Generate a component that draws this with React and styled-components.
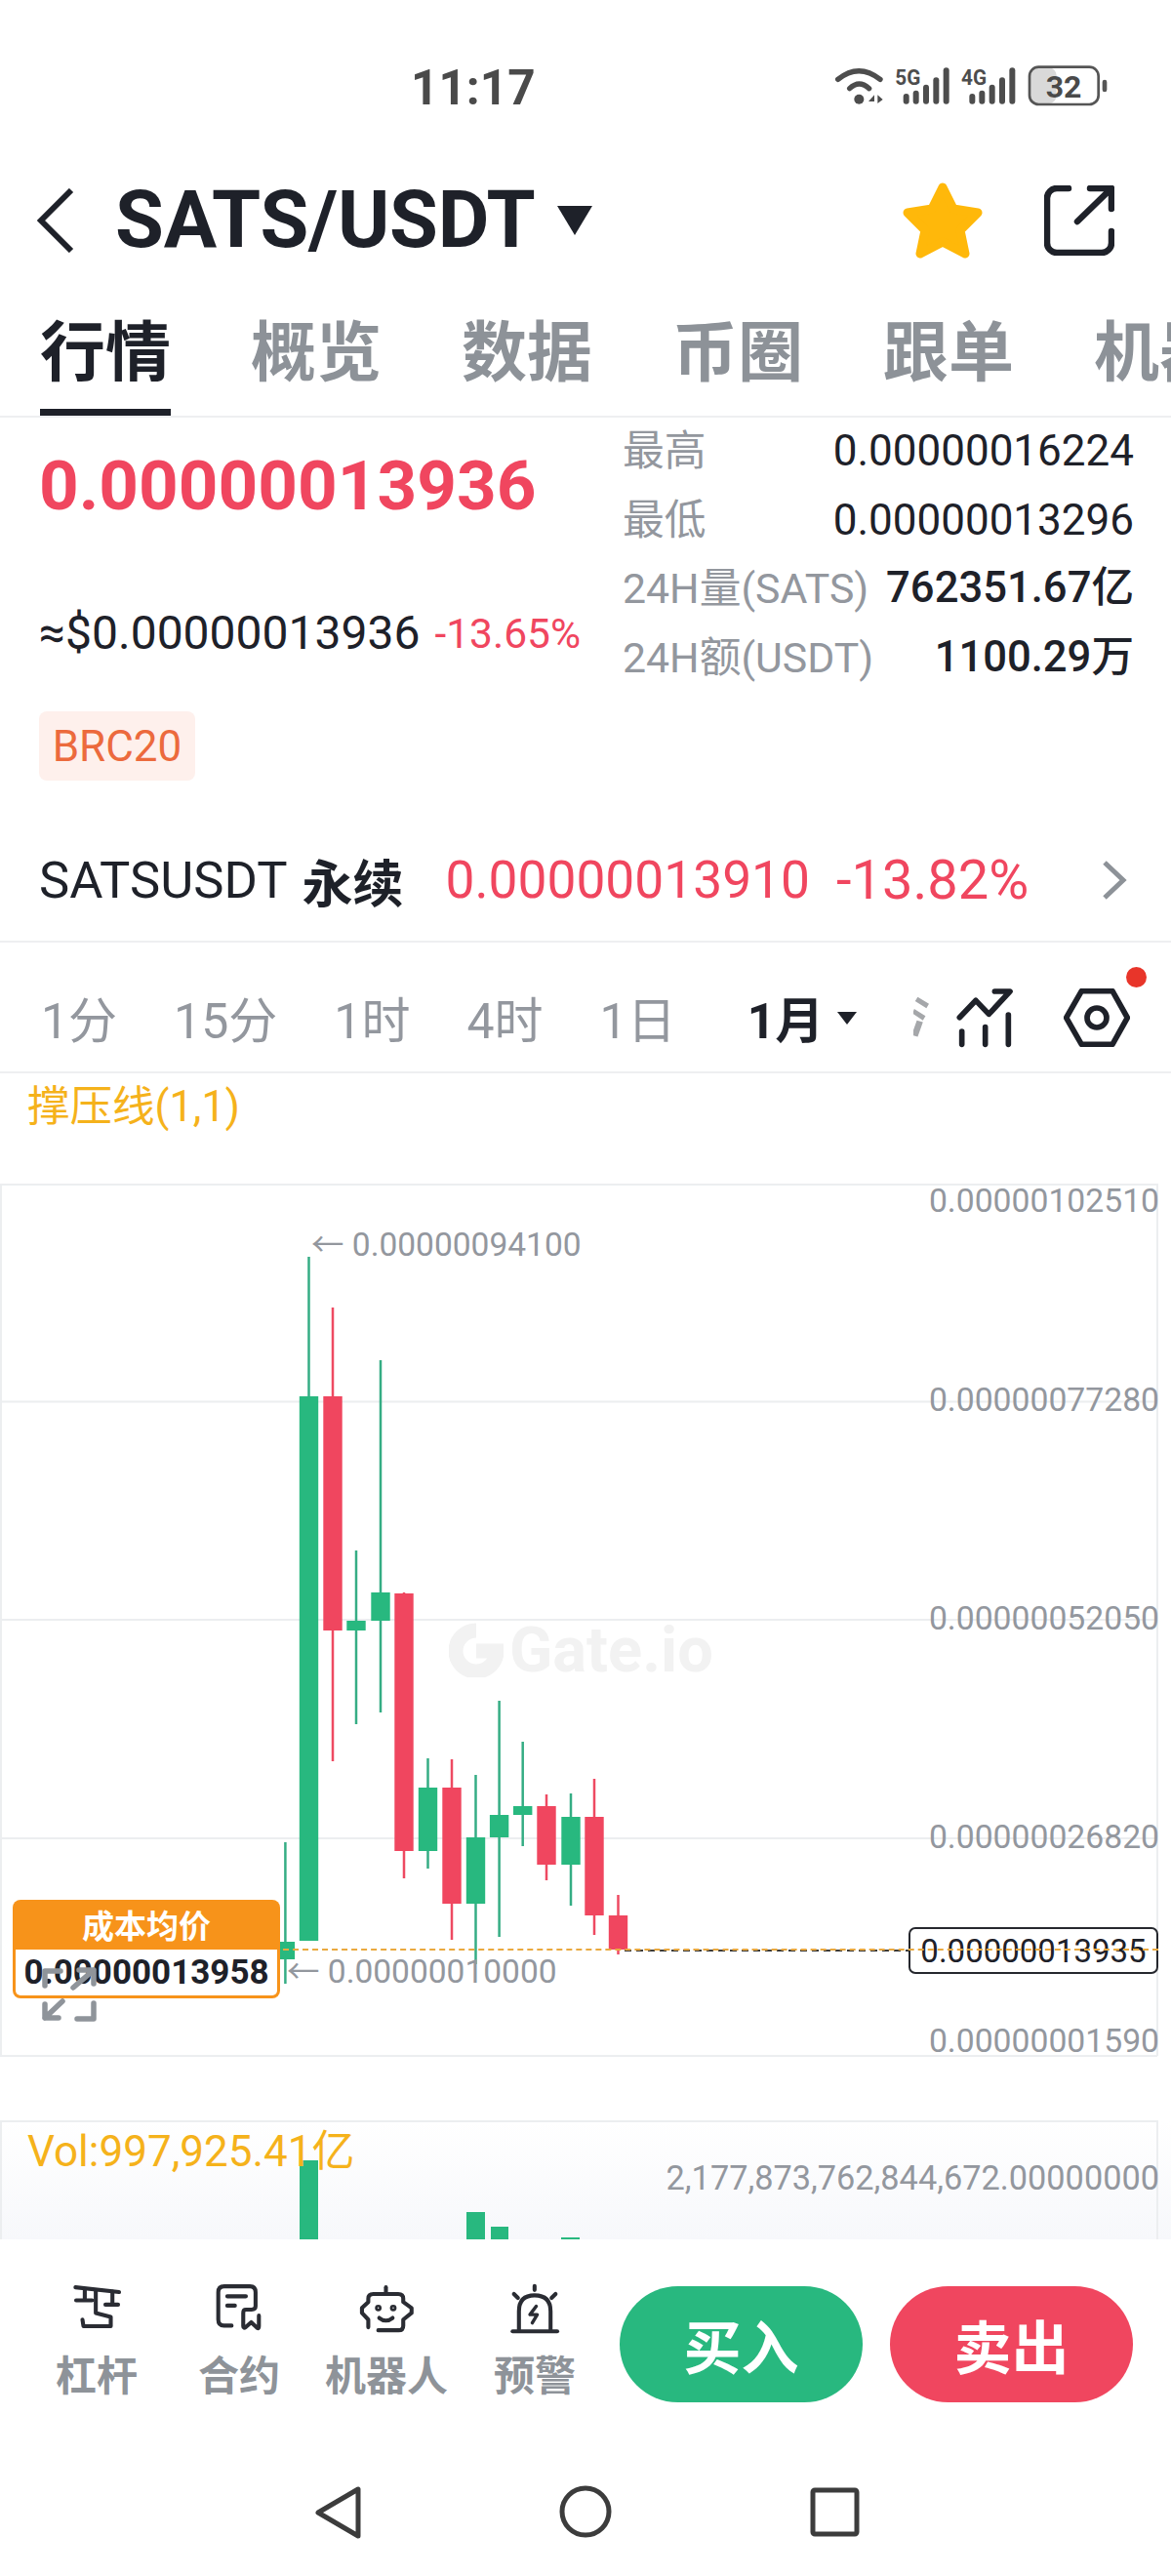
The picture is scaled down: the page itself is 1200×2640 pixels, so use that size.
import React from "react";
import styled, { createGlobalStyle } from "styled-components";

const FONT = `Roboto, "Noto Sans CJK SC", "Noto Sans", sans-serif`;
const INK = "#1e2129";
const MUTED = "#93979e";
const RED = "#f0465f";
const GREEN = "#28b87f";
const YELLOW = "#f5b21b";
const LINE = "#eeeff1";

const Global = createGlobalStyle`
  html, body { margin: 0; padding: 0; background: #fff; }
  * { box-sizing: border-box; }
`;

const Page = styled.div`
  width: 1200px;
  height: 2640px;
  overflow: hidden;
  background: #fff;
  font-family: ${FONT};
  color: ${INK};
`;

/* status bar */
const StatusBar = styled.div`
  height: 170px;
  padding: 61px 50px 0 421px;
  display: flex;
  justify-content: space-between;
  align-items: flex-start;
`;
const Clock = styled.div`
  font-size: 49.5px;
  line-height: 58px;
  font-weight: 700;
  color: #4a4a4a;
`;
const StatusIcons = styled.svg`
  width: 300px;
  height: 55px;
  display: block;
  margin-top: -1px;
`;

/* header */
const Header = styled.div`
  height: 112px;
  padding: 0 58px 0 37px;
  display: flex;
  align-items: center;
`;
const BackChevron = styled.svg`
  width: 40px;
  height: 66px;
  margin-right: 41px;
`;
const Title = styled.div`
  font-size: 81px;
  line-height: 90px;
  font-weight: 700;
  letter-spacing: -0.2px;
`;
const TitleCaret = styled.div`
  width: 0;
  height: 0;
  margin-left: 22px;
  border-left: 18px solid transparent;
  border-right: 18px solid transparent;
  border-top: 30px solid ${INK};
`;
const HeaderActions = styled.div`
  margin-left: auto;
  display: flex;
  align-items: center;
  gap: 62px;
`;

/* tabs */
const Tabs = styled.div`
  height: 146px;
  padding-left: 41px;
  display: flex;
  gap: 82px;
  overflow: hidden;
  border-bottom: 2px solid ${LINE};
`;
const Tab = styled.div`
  position: relative;
  flex: none;
  height: 144px;
  padding-top: 47px;
  font-size: 67px;
  line-height: 67px;
  font-weight: 700;
  white-space: nowrap;
  color: ${(p) => (p.$active ? INK : "#8d9298")};
  ${(p) =>
    p.$active &&
    `&::after { content: ""; position: absolute; left: 0; right: 0; bottom: 0; height: 7px; background: ${INK}; }`}
`;

/* quote */
const Quote = styled.div`
  height: 422px;
  display: flex;
`;
const QuoteLeft = styled.div`
  width: 638px;
  padding: 34px 0 0 40px;
`;
const LastPrice = styled.div`
  font-size: 71px;
  line-height: 72px;
  font-weight: 700;
  color: ${RED};
`;
const FiatRow = styled.div`
  margin-top: 84px;
  height: 60px;
  display: flex;
  align-items: center;
  gap: 15px;
  white-space: nowrap;
`;
const Fiat = styled.span`
  font-size: 48px;
  font-weight: 400;
`;
const FiatChange = styled.span`
  font-size: 42.5px;
  color: ${RED};
  margin-top: 2px;
`;
const Tag = styled.div`
  margin-top: 51px;
  width: 160px;
  height: 71px;
  border-radius: 8px;
  background: #fef0ec;
  color: #ec6a3d;
  font-size: 44px;
  display: flex;
  align-items: center;
  justify-content: center;
`;
const Stats = styled.div`
  width: 524px;
  margin-top: -1px;
  display: flex;
  flex-direction: column;
`;
const StatRow = styled.div`
  height: 70.5px;
  display: flex;
  align-items: center;
  justify-content: space-between;
  white-space: nowrap;
`;
const StatLabel = styled.span`
  font-size: 42.8px;
  line-height: 44px;
  color: ${MUTED};
`;
const StatValue = styled.span`
  font-size: ${(p) => (p.$strong ? 43.6 : 44)}px;
  line-height: 44px;
  font-weight: ${(p) => (p.$strong ? 500 : 400)};
`;

/* perpetual row */
const PerpRow = styled.div`
  height: 116px;
  padding: 0 45px 10px 40px;
  display: flex;
  align-items: center;
  border-bottom: 2px solid ${LINE};
  white-space: nowrap;
`;
const PerpName = styled.span`
  font-size: 52.5px;
`;
const PerpKind = styled.span`
  font-size: 52px;
  font-weight: 700;
  margin-left: 15px;
`;
const PerpPrice = styled.span`
  font-size: 53.3px;
  color: ${RED};
  margin-left: 43px;
`;
const PerpChange = styled.span`
  font-size: 56px;
  color: ${RED};
  margin-left: 27px;
`;
const PerpChevron = styled.svg`
  margin-left: auto;
  width: 26px;
  height: 42px;
`;

/* periods */
const Periods = styled.div`
  height: 134px;
  padding: 20px 54px 0 42px;
  display: flex;
  align-items: center;
  gap: 58px;
  border-bottom: 2px solid ${LINE};
  white-space: nowrap;
`;
const Period = styled.span`
  flex: none;
  font-size: 50px;
  color: ${MUTED};
`;
const ActivePeriod = styled.div`
  flex: none;
  margin-left: 15px;
  display: flex;
  align-items: center;
  gap: 14px;
  font-size: 50px;
  font-weight: 700;
`;
const PeriodCaret = styled.div`
  width: 0;
  height: 0;
  margin-top: 2px;
  border-left: 10px solid transparent;
  border-right: 10px solid transparent;
  border-top: 13px solid ${INK};
`;
const PeriodTools = styled.div`
  margin-left: auto;
  margin-top: 2px;
  display: flex;
  align-items: center;
  gap: 28px;
`;
const FadedMark = styled.svg`
  width: 16px;
  height: 46px;
`;
const ChartTool = styled.svg`
  width: 60px;
  height: 65px;
  margin-right: 22px;
`;
const HexWrap = styled.div`
  position: relative;
  width: 68px;
  height: 60px;
`;
const RedDot = styled.div`
  position: absolute;
  top: -22px;
  left: 64px;
  width: 21px;
  height: 21px;
  border-radius: 50%;
  background: #e8352a;
`;

/* indicator */
const IndicatorRow = styled.div`
  height: 113px;
  padding: 13px 0 0 28px;
  font-size: 43.5px;
  line-height: 44px;
  color: ${YELLOW};
`;

/* chart */
const Chart = styled.div`
  position: relative;
  height: 960px;
`;
const ChartSvg = styled.svg`
  position: absolute;
  inset: 0;
  display: block;
`;
const AxisLabel = styled.div`
  position: absolute;
  right: 12px;
  top: ${(p) => p.$y}px;
  font-size: 33.7px;
  line-height: 40px;
  color: ${MUTED};
`;
const Extreme = styled.div`
  position: absolute;
  left: ${(p) => p.$x}px;
  top: ${(p) => p.$y}px;
  font-size: 33.5px;
  line-height: 40px;
  color: ${MUTED};
  white-space: nowrap;
`;
const Watermark = styled.div`
  position: absolute;
  left: 460px;
  top: 448px;
  height: 60px;
  display: flex;
  align-items: center;
  gap: 6px;
  font-size: 65px;
  font-weight: 700;
  line-height: 60px;
  color: #f2f2f2;
`;
const PriceTag = styled.div`
  position: absolute;
  right: 13px;
  top: 762px;
  width: 256px;
  height: 48px;
  border: 2px solid #26282e;
  border-radius: 7px;
  background: #fff;
  font-size: 33px;
  display: flex;
  align-items: center;
  justify-content: center;
`;
const PriceLine = styled.div`
  position: absolute;
  left: 290px;
  right: 13px;
  top: 784px;
  border-top: 2px dashed #eaa93f;
`;
const CostBadge = styled.div`
  position: absolute;
  left: 13px;
  top: 734px;
  width: 274px;
  height: 101px;
  padding: 0 3px 3px;
  border-radius: 8px;
  background: #f7931a;
  display: flex;
  flex-direction: column;
`;
const CostTitle = styled.div`
  height: 51px;
  color: #fff;
  font-size: 33px;
  font-weight: 700;
  text-align: center;
  line-height: 56px;
`;
const CostValue = styled.div`
  flex: 1;
  background: #fff;
  border-radius: 0 0 5px 5px;
  font-size: 35px;
  font-weight: 700;
  display: flex;
  align-items: center;
  justify-content: center;
`;
const ExpandIcon = styled.svg`
  position: absolute;
  left: 43px;
  top: 803px;
  width: 56px;
  height: 56px;
`;

/* volume */
const Volume = styled.div`
  position: relative;
  height: 122px;
  background: linear-gradient(#ffffff, #f7f8fb);
  overflow: hidden;
`;
const VolLabel = styled.div`
  position: absolute;
  left: 28px;
  top: 10px;
  font-size: 44px;
  line-height: 44px;
  color: ${YELLOW};
  z-index: 1;
`;
const VolAxis = styled.div`
  position: absolute;
  right: 12px;
  top: 39px;
  font-size: 34.3px;
  line-height: 40px;
  color: ${MUTED};
`;

/* action bar */
const ActionBar = styled.div`
  height: 205px;
  padding: 43px 40px 0 26px;
  display: flex;
  align-items: flex-start;
  background: #fff;
`;
const Tools = styled.div`
  display: grid;
  grid-template-columns: 146px 146px 156px 148px;
  margin-right: 13px;
`;
const ToolItem = styled.div`
  display: flex;
  flex-direction: column;
  align-items: center;
`;
const ToolIcon = styled.svg`
  height: 58px;
  width: 60px;
  margin-bottom: 18px;
`;
const ToolLabel = styled.span`
  font-size: 42px;
  line-height: 44px;
  font-weight: 700;
  color: #8e9399;
`;
const TradeButtons = styled.div`
  display: flex;
  gap: 28px;
  margin-top: 5px;
`;
const TradeButton = styled.div`
  width: 249px;
  height: 119px;
  border-radius: 60px;
  background: ${(p) => p.$bg};
  color: #fff;
  font-size: 59px;
  font-weight: 700;
  display: flex;
  align-items: center;
  justify-content: center;
`;

/* android nav */
const NavBar = styled.div`
  height: 140px;
  padding-top: 8px;
  display: flex;
  justify-content: center;
  align-items: center;
  gap: 195px;
`;
const NavIcon = styled.svg`
  width: 60px;
  height: 60px;
  fill: none;
  stroke: #3c3c3c;
  stroke-width: 5;
  stroke-linejoin: round;
`;

const candles = [
  [292.4, "g", 1888, 1990, 2008, 2033],
  [316.5, "g", 1288, 1431, 1989, 1989],
  [341, "r", 1340, 1431, 1671, 1805],
  [365, "g", 1589, 1661, 1671, 1767],
  [390, "g", 1394, 1632, 1661, 1755],
  [414, "r", 1632, 1633, 1897, 1925],
  [438.5, "g", 1802, 1832, 1897, 1915],
  [463, "r", 1803, 1832, 1951, 1988],
  [487.5, "g", 1819, 1883, 1951, 2013],
  [511.6, "g", 1743, 1860, 1883, 1985],
  [535.7, "g", 1785, 1851, 1860, 1892],
  [560, "r", 1839, 1851, 1911, 1927],
  [585, "g", 1838, 1862, 1911, 1953],
  [609, "r", 1823, 1862, 1963, 1983],
  [633.5, "r", 1942, 1963, 1998, 2003],
];

const stats = [
  ["最高", "0.00000016224"],
  ["最低", "0.00000013296"],
  ["24H量(SATS)", "762351.67亿", true],
  ["24H额(USDT)", "1100.29万", true],
];

const axis = [
  ["0.00000102510", 1231],
  ["0.00000077280", 1435],
  ["0.00000052050", 1659],
  ["0.00000026820", 1883],
  ["0.00000001590", 2092],
];

const Sig = ({ dx, label }) => (
  <g fill="#4d4d4d">
    <text x={352 + dx} y="140" fontFamily="Roboto, sans-serif" fontSize="66" fontWeight="700" textLength="78" lengthAdjust="spacingAndGlyphs">
      {label}
    </text>
    {[
      [377, 168],
      [407, 158],
      [438, 140],
      [469, 118],
      [500, 88],
    ].map(([x, y]) => (
      <rect key={x} x={x + dx} y={y} width="18" height={200 - y} rx="9" />
    ))}
  </g>
);

export default function App() {
  return (
    <Page>
      <Global />
      <StatusBar>
        <Clock>11:17</Clock>
        <StatusIcons viewBox="150 60 900 165">
          <g fill="none" stroke="#4d4d4d" strokeWidth="16" strokeLinecap="round">
            <path d="M176 124 Q240 72 306 124" />
            <path d="M212 152 Q241 124 272 152" />
          </g>
          <g fill="#4d4d4d">
            <circle cx="241" cy="185" r="15" />
            <path d="M288 172 L270 192 H288 Z M298 172 L314 186 L298 198 Z" />
          </g>
          <Sig dx={0} label="5G" />
          <Sig dx={203} label="4G" />
          <rect x="768" y="88" width="80" height="110" rx="24" fill="#d9d9d9" />
          <rect x="765" y="86" width="212" height="115" rx="28" fill="none" stroke="#555" strokeWidth="8" />
          <text x="870" y="180" textAnchor="middle" fontFamily="Roboto, sans-serif" fontSize="96" fontWeight="700" fill="#4a4a4a">
            32
          </text>
          <rect x="989" y="125" width="14" height="38" rx="7" fill="#555" />
        </StatusIcons>
      </StatusBar>

      <Header>
        <BackChevron viewBox="0 0 40 66" fill="none" stroke={INK} strokeWidth="6">
          <path d="M36 2 L5 33 L36 64" />
        </BackChevron>
        <Title>SATS/USDT</Title>
        <TitleCaret />
        <HeaderActions>
          <svg width="84" height="80" viewBox="0 0 84 80">
            <path
              d="M42 6 L53 28 L78 32 L60 50 L65 74 L42 62 L19 74 L24 50 L6 32 L31 28 Z"
              fill="#ffb80a"
              stroke="#ffb80a"
              strokeWidth="9"
              strokeLinejoin="round"
            />
          </svg>
          <svg width="72" height="72" viewBox="0 0 72 72" fill="none" stroke={INK} strokeWidth="6.5" strokeLinecap="round" strokeLinejoin="round">
            <path d="M25 3 H13 A10 10 0 0 0 3 13 V59 A10 10 0 0 0 13 69 H59 A10 10 0 0 0 69 59 V47" />
            <path d="M34 37 L69 3 M47 3 H69 V24" />
          </svg>
        </HeaderActions>
      </Header>

      <Tabs>
        {["行情", "概览", "数据", "币圈", "跟单", "机器人"].map((t, i) => (
          <Tab key={t} $active={i === 0}>
            {t}
          </Tab>
        ))}
      </Tabs>

      <Quote>
        <QuoteLeft>
          <LastPrice>0.00000013936</LastPrice>
          <FiatRow>
            <Fiat>≈$0.00000013936</Fiat>
            <FiatChange>-13.65%</FiatChange>
          </FiatRow>
          <Tag>BRC20</Tag>
        </QuoteLeft>
        <Stats>
          {stats.map(([l, v, s]) => (
            <StatRow key={l}>
              <StatLabel>{l}</StatLabel>
              <StatValue $strong={s}>{v}</StatValue>
            </StatRow>
          ))}
        </Stats>
      </Quote>

      <PerpRow>
        <PerpName>SATSUSDT</PerpName>
        <PerpKind>永续</PerpKind>
        <PerpPrice>0.00000013910</PerpPrice>
        <PerpChange>-13.82%</PerpChange>
        <PerpChevron viewBox="0 0 26 42" fill="none" stroke="#8d9298" strokeWidth="5">
          <path d="M3 3 L22 21 L3 39" />
        </PerpChevron>
      </PerpRow>

      <Periods>
        {["1分", "15分", "1时", "4时", "1日"].map((p) => (
          <Period key={p}>{p}</Period>
        ))}
        <ActivePeriod>
          1月
          <PeriodCaret />
        </ActivePeriod>
        <PeriodTools>
          <FadedMark viewBox="0 0 18 48" fill="#a5a7aa">
            <path d="M5 0 L18 8 L15 13 L2 5 Z M1 14 L14 22 L11 27 L-1 19 Z M4 27 L11 29 L5 46 L-2 44 Z" />
          </FadedMark>
          <ChartTool viewBox="360 165 180 195" fill="none" stroke={INK} strokeWidth="17" strokeLinecap="round" strokeLinejoin="round">
            <path d="M370 260 L420 208 L460 250 L525 180 H478" />
            <path d="M377 303 V343 M449 290 V343 M520 252 V343" />
          </ChartTool>
          <HexWrap>
            <svg width="68" height="60" viewBox="695 168 204 180" fill="none" stroke={INK} strokeWidth="17" strokeLinejoin="round">
              <path d="M703 258 L750 176 H845 L891 258 L845 340 H750 Z" />
              <circle cx="797" cy="258" r="30" />
            </svg>
            <RedDot />
          </HexWrap>
        </PeriodTools>
      </Periods>

      <IndicatorRow>撑压线(1,1)</IndicatorRow>

      <Chart>
        <ChartSvg width="1200" height="960" viewBox="0 1213 1200 960">
          <g stroke="#eceef0" strokeWidth="2">
            {[1214, 1436.5, 1660, 1884, 2107].map((y) => (
              <line key={y} x1="0" x2="1186" y1={y} y2={y} />
            ))}
            <line x1="1" x2="1" y1="1213" y2="2107" />
            <line x1="1186" x2="1186" y1="1213" y2="2107" />
          </g>
          {candles.map(([x, c, hi, top, bot, lo]) => (
            <g key={x}>
              <line x1={x} x2={x} y1={hi} y2={lo} stroke={c === "g" ? "#35ad84" : "#ee4a62"} strokeWidth="2.5" />
              <rect x={x - 9.7} y={top} width="19.4" height={bot - top} fill={c === "g" ? GREEN : RED} />
            </g>
          ))}
          <line x1="640" x2="931" y1="1999" y2="1999" stroke="#3a3a3a" strokeWidth="2" strokeDasharray="7 5" />
        </ChartSvg>

        <Watermark>
          <svg width="56" height="56" viewBox="0 0 56 56" fill="none" stroke="#f2f2f2" strokeWidth="15">
            <path d="M28 8 A21 21 0 1 0 49 29 H28" />
          </svg>
          Gate.io
        </Watermark>

        {axis.map(([t, y]) => (
          <AxisLabel key={t} $y={y - 1213 - 20}>
            {t}
          </AxisLabel>
        ))}
        <Extreme $x={319} $y={43}>
          ← 0.00000094100
        </Extreme>
        <Extreme $x={294} $y={788}>
          ← 0.00000010000
        </Extreme>

        <PriceTag>0.00000013935</PriceTag>
        <PriceLine />

        <CostBadge>
          <CostTitle>成本均价</CostTitle>
          <CostValue>0.00000013958</CostValue>
        </CostBadge>
        <ExpandIcon viewBox="0 0 56 56" fill="none" stroke="#8f949a" strokeWidth="5.5" strokeLinecap="round" strokeLinejoin="round">
          <path d="M3 19 V4 H19" />
          <path d="M32 21 L53 3 M38 3 H53 V17" />
          <path d="M3 52 L21 35 M3 38 V52 H17" />
          <path d="M53 37 V53 H36" />
        </ExpandIcon>
      </Chart>

      <Volume>
        <ChartSvg width="1200" height="122" viewBox="0 2173 1200 122">
          <line x1="0" x2="1186" y1="2174" y2="2174" stroke="#eceef0" strokeWidth="2" />
          <line x1="1" x2="1" y1="2173" y2="2295" stroke="#eceef0" strokeWidth="2" />
          <line x1="1186" x2="1186" y1="2173" y2="2295" stroke="#eceef0" strokeWidth="2" />
          <g fill={GREEN}>
            <rect x="307" y="2214" width="19" height="81" />
            <rect x="478" y="2267" width="19" height="28" />
            <rect x="503" y="2282" width="18" height="13" />
            <rect x="575" y="2293" width="19" height="2" />
          </g>
        </ChartSvg>
        <VolLabel>Vol:997,925.41亿</VolLabel>
        <VolAxis>2,177,873,762,844,672.00000000</VolAxis>
      </Volume>

      <ActionBar>
        <Tools>
          <ToolItem>
            <ToolIcon viewBox="30 15 175 170" fill="none" stroke="#2a2c33" strokeWidth="12" strokeLinecap="round" strokeLinejoin="round">
              <path d="M54 33 L185 47" />
              <path d="M82 40 V72 M56 72 H104 M165 46 V85 M144 85 H182" />
              <path d="M115 42 V110 L160 122 V150 H78 L75 130" />
            </ToolIcon>
            <ToolLabel>杠杆</ToolLabel>
          </ToolItem>
          <ToolItem>
            <ToolIcon viewBox="470 15 175 170" fill="none" stroke="#2a2c33" strokeWidth="12" strokeLinecap="round" strokeLinejoin="round">
              <path d="M535 148 H512 Q495 148 495 130 V48 Q495 30 513 30 H590 Q607 30 607 48 V90 Q607 100 595 100 H578 Q570 100 570 110 V150 Q570 158 578 152 L594 138 L612 155 Q617 158 617 150 V118" />
              <path d="M522 60 H578 M522 88 H545" />
            </ToolIcon>
            <ToolLabel>合约</ToolLabel>
          </ToolItem>
          <ToolItem>
            <ToolIcon viewBox="52 10 175 170" fill="none" stroke="#2a2c33" strokeWidth="12" strokeLinecap="round" strokeLinejoin="round">
              <path d="M138 28 V46" />
              <path d="M85 148 V125 L66 105 V90 L85 72 V62 Q85 48 100 48 H175 Q190 48 190 62 V72 L215 90 V105 L190 125 V143 Q190 157 176 157 H115" />
              <circle cx="115" cy="90" r="4" />
              <circle cx="160" cy="90" r="4" />
              <path d="M118 120 Q138 136 158 120" />
            </ToolIcon>
            <ToolLabel>机器人</ToolLabel>
          </ToolItem>
          <ToolItem>
            <ToolIcon viewBox="505 10 175 170" fill="none" stroke="#2a2c33" strokeWidth="12" strokeLinecap="round" strokeLinejoin="round">
              <path d="M592 24 V36 M530 48 L542 60 M655 48 L643 60" />
              <path d="M545 155 V100 Q545 52 592 52 Q640 52 640 100 V155" />
              <path d="M526 160 H660" />
              <path d="M597 85 L578 110 H600 L585 135" strokeWidth="10" />
            </ToolIcon>
            <ToolLabel>预警</ToolLabel>
          </ToolItem>
        </Tools>
        <TradeButtons>
          <TradeButton $bg={GREEN}>买入</TradeButton>
          <TradeButton $bg={RED}>卖出</TradeButton>
        </TradeButtons>
      </ActionBar>

      <NavBar>
        <NavIcon viewBox="0 0 60 60">
          <path d="M52 7 V55 L11 31 Z" />
        </NavIcon>
        <NavIcon viewBox="0 0 60 60">
          <circle cx="30" cy="30" r="24" />
        </NavIcon>
        <NavIcon viewBox="0 0 60 60">
          <rect x="8" y="8" width="45" height="45" rx="2" />
        </NavIcon>
      </NavBar>
    </Page>
  );
}
